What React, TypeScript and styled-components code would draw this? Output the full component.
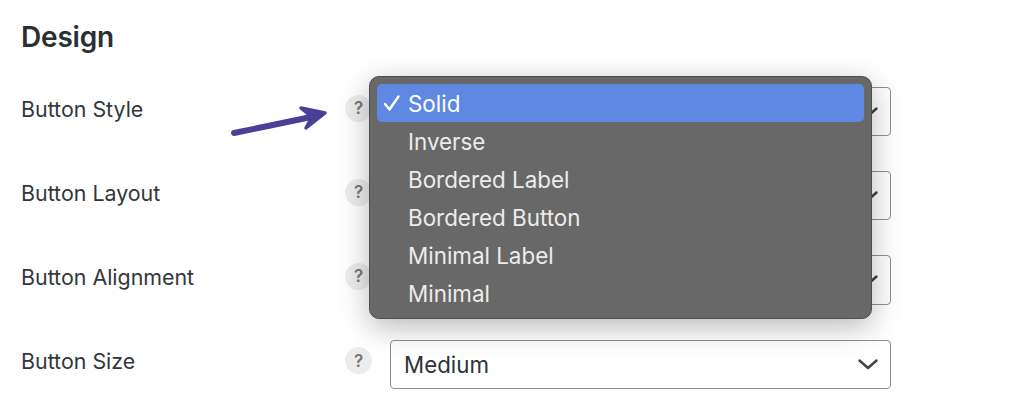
import styled, { createGlobalStyle } from 'styled-components';

const GlobalStyle = createGlobalStyle`
  html, body {
    margin: 0;
    background: #fff;
    overflow: hidden;
  }
  body {
    font-family: Inter, "Noto Sans", sans-serif;
    color: #2c3338;
  }
`;

const Page = styled.main`
  position: relative;
  width: 1024px;
  height: 407px;
  box-sizing: border-box;
  padding: 20px 0 0 21px;
`;

const Heading = styled.h2`
  margin: 0 0 33px;
  font-size: 28px;
  line-height: 34px;
  font-weight: 600;
  letter-spacing: -0.2px;
  color: #2a2f33;
`;

const Rows = styled.div`
  display: flex;
  flex-direction: column;
  gap: 35px;
`;

const Row = styled.div`
  display: grid;
  grid-template-columns: 324px 24px 501px;
  align-items: center;
  height: 49.2px;
`;

const Label = styled.span`
  font-size: 21.4px;
  color: #32373c;
  margin-bottom: 6px;
`;

const Help = styled.span`
  display: flex;
  align-items: center;
  justify-content: center;
  width: 27px;
  height: 27px;
  margin-bottom: 7px;
  border-radius: 50%;
  background: #ececec;
  color: #777;
  font-size: 17px;
  font-weight: 600;
`;

const Select = styled.div`
  grid-column: 3;
  margin-left: 21px;
  display: flex;
  align-items: center;
  justify-content: space-between;
  box-sizing: border-box;
  height: 49.2px;
  width: 501px;
  padding: 0 10px 0 13px;
  border: 1px solid #8c8f94;
  border-radius: 4px;
  background: #fff;
  font-size: 22.3px;
  color: #2c3338;
`;

const Chevron = styled.svg`
  margin-left: auto;
  flex: none;
`;

const Menu = styled.ul`
  position: absolute;
  left: 369px;
  top: 76px;
  width: 503px;
  height: 243px;
  box-sizing: border-box;
  margin: 0;
  padding: 7px;
  list-style: none;
  background: #686868;
  border: 1px solid #4e4e4e;
  border-radius: 10px;
  box-shadow: 0 8px 30px rgba(0, 0, 0, 0.28);
`;

const MenuItem = styled.li<{ $active?: boolean }>`
  display: flex;
  align-items: center;
  box-sizing: border-box;
  height: 38px;
  padding-left: 6px;
  border-radius: 5px;
  background: ${(p) => (p.$active ? '#5f88e3' : 'transparent')};
  color: ${(p) => (p.$active ? '#fff' : '#ececec')};
  font-size: 22.4px;
`;

const CheckSlot = styled.span`
  display: flex;
  flex: none;
  width: 25px;
`;

const Arrow = styled.svg`
  position: absolute;
  left: 228px;
  top: 100px;
`;

const rows = [
  ['Button Style', ''],
  ['Button Layout', ''],
  ['Button Alignment', ''],
  ['Button Size', 'Medium'],
];

const options = ['Solid', 'Inverse', 'Bordered Label', 'Bordered Button', 'Minimal Label', 'Minimal'];

export default function App() {
  return (
    <Page>
      <GlobalStyle />
      <Heading>Design</Heading>
      <Rows>
        {rows.map(([label, value]) => (
          <Row key={label}>
            <Label>{label}</Label>
            <Help>?</Help>
            <Select>
              {value}
              <Chevron width="24" height="24" viewBox="0 0 24 24" fill="none">
                <path d="M3.5 8.5 L12 16 L20.5 8.5" stroke="#3c434a" strokeWidth="2.5" strokeLinecap="round" strokeLinejoin="round" />
              </Chevron>
            </Select>
          </Row>
        ))}
      </Rows>
      <Menu>
        {options.map((option, i) => (
          <MenuItem key={option} $active={i === 0}>
            <CheckSlot>
              {i === 0 && (
                <svg width="18" height="18" viewBox="0 0 18 18" fill="none">
                  <path d="M2 10 L6.5 15.5 L15.5 2.5" stroke="#fff" strokeWidth="2.4" strokeLinecap="round" strokeLinejoin="round" />
                </svg>
              )}
            </CheckSlot>
            {option}
          </MenuItem>
        ))}
      </Menu>
      <Arrow width="104" height="38" viewBox="0 0 104 38" fill="none">
        <path d="M6 33 L88 16" stroke="#4a3f97" strokeWidth="6" strokeLinecap="round" />
        <path d="M73 8 L97 13 L78 28 L84 17 Z" fill="#4a3f97" stroke="#4a3f97" strokeWidth="3.5" strokeLinejoin="round" />
      </Arrow>
    </Page>
  );
}
